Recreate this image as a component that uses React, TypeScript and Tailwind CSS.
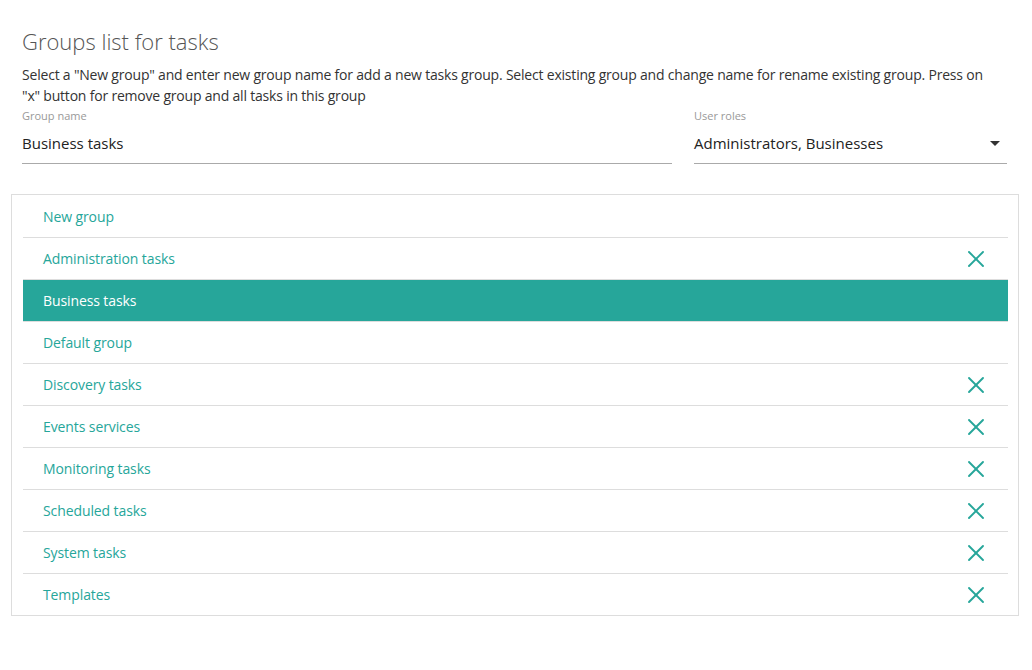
import { X } from 'lucide-react'

const groups = [
  { name: 'New group', removable: false },
  { name: 'Administration tasks', removable: true },
  { name: 'Business tasks', removable: false },
  { name: 'Default group', removable: false },
  { name: 'Discovery tasks', removable: true },
  { name: 'Events services', removable: true },
  { name: 'Monitoring tasks', removable: true },
  { name: 'Scheduled tasks', removable: true },
  { name: 'System tasks', removable: true },
  { name: 'Templates', removable: true },
]

export default function App() {
  const selected = 'Business tasks'

  return (
    <div className="w-[1032px] h-[670px] bg-white font-['Open_Sans',sans-serif] text-[#333]">
      <div className="pl-[22px] pr-[25px] pt-[26px]">
        <h1 className="text-[22px] font-light leading-[30px] text-[#555]">Groups list for tasks</h1>
        <p className="mt-[8px] pr-[10px] text-[14px] leading-[21px] tracking-[-0.2px] text-[#333]">
          Select a "New group" and enter new group name for add a new tasks group. Select existing group and change name for rename existing group. Press on "x" button for remove group and all tasks in this group
        </p>
        <div className="flex gap-[22px] mt-[2px]">
          <div className="w-[650px]">
            <label className="block text-[11px] leading-[16px] text-[#999]">Group name</label>
            <div className="h-[40px] flex items-center border-b border-[#aaa] text-[15px] text-[#222]">Business tasks</div>
          </div>
          <div className="flex-1">
            <label className="block text-[11px] leading-[16px] text-[#999]">User roles</label>
            <div className="h-[40px] flex items-center justify-between border-b border-[#aaa] text-[15px] text-[#222]">
              <span>Administrators, Businesses</span>
              <span className="mr-[7px] w-0 h-0 border-l-[5px] border-r-[5px] border-t-[5px] border-l-transparent border-r-transparent border-t-[#333]" />
            </div>
          </div>
        </div>
      </div>
      <div className="mx-[11px] mt-[30px] w-[1008px] border border-[#ddd] pl-[11px] pr-[10px]">
        {groups.map((g, i) => {
          const active = g.name === selected
          return (
            <div
              key={g.name}
              className={`h-[42px] flex items-center justify-between pl-[20px] pr-[18px] text-[14px] tracking-[-0.1px] ${i > 0 ? 'border-t border-[#ddd]' : ''} ${active ? 'bg-[#26a69a] text-white' : 'text-[#26a69a]'}`}
            >
              <span>{g.name}</span>
              {g.removable && <X size={28} strokeWidth={1.6} className="text-[#26a69a]" />}
            </div>
          )
        })}
      </div>
    </div>
  )
}
